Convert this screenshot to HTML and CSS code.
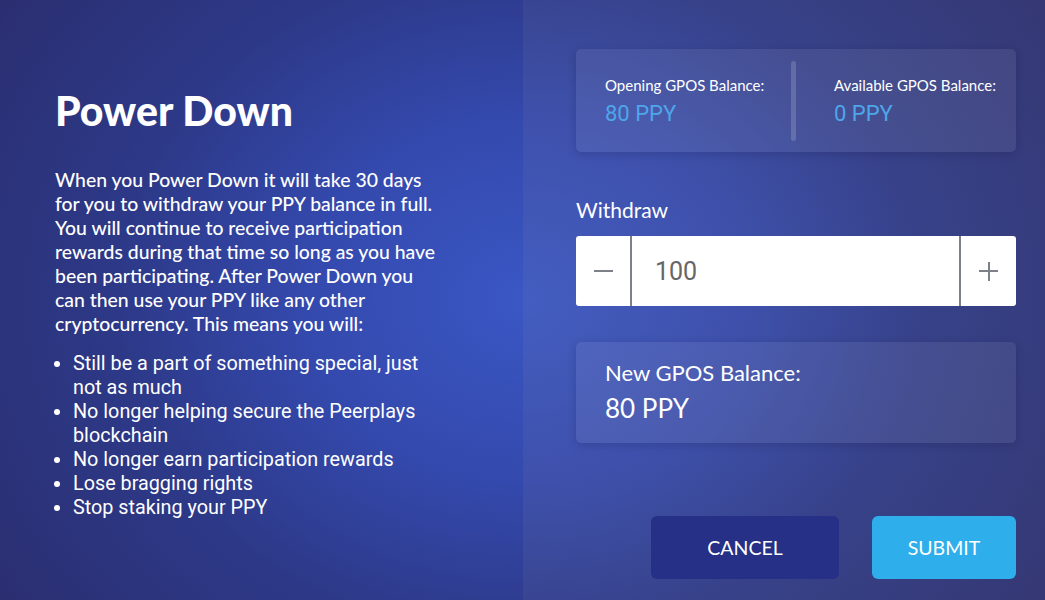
FILE: index.html
```html
<!DOCTYPE html>
<html lang="en">
<head>
<meta charset="utf-8">
<title>Power Down</title>
<link rel="stylesheet" href="styles.css">
</head>
<body>
<div class="page">
  <section class="info">
    <h1 class="title">Power Down</h1>
    <p class="desc">When you Power Down it will take 30 days for you to withdraw your PPY balance in full. You will continue to receive participation rewards during that time so long as you have been participating. After Power Down you can then use your PPY like any other cryptocurrency. This means you will:</p>
    <ul class="list">
      <li>Still be a part of something special, just not as much</li>
      <li>No longer helping secure the Peerplays blockchain</li>
      <li>No longer earn participation rewards</li>
      <li>Lose bragging rights</li>
      <li>Stop staking your PPY</li>
    </ul>
  </section>
  <section class="form">
    <div class="card balances">
      <div class="bal">
        <div class="bal-label">Opening GPOS Balance:</div>
        <div class="bal-value">80 PPY</div>
      </div>
      <div class="divider"></div>
      <div class="bal bal-right">
        <div class="bal-label">Available GPOS Balance:</div>
        <div class="bal-value">0 PPY</div>
      </div>
    </div>
    <div class="field-label">Withdraw</div>
    <div class="stepper">
      <div class="step step-minus"><span class="minus"></span></div>
      <div class="amount">100</div>
      <div class="step step-plus"><span class="plus"></span></div>
    </div>
    <div class="card newbal">
      <div class="new-label">New GPOS Balance:</div>
      <div class="new-value">80 PPY</div>
    </div>
    <div class="actions">
      <button class="btn btn-cancel">CANCEL</button>
      <button class="btn btn-submit">SUBMIT</button>
    </div>
  </section>
</div>
</body>
</html>
```
FILE: styles.css
```css
* { box-sizing: border-box; }
html, body { margin: 0; padding: 0; }
body {
  width: 1045px;
  height: 600px;
  overflow: hidden;
  color: #fff;
  font-family: "Lato", "Liberation Sans", sans-serif;
  background: radial-gradient(ellipse 620px 520px at 522px 300px, #3a57c4 0%, #3449ad 35%, #2d3988 65%, #2b2f72 100%);
}
.page {
  display: flex;
  height: 600px;
}
.info {
  width: 523px;
  padding: 87px 0 0 55px;
}
.title {
  margin: 0;
  font-size: 41px;
  line-height: 48px;
  font-weight: 900;
}
.desc {
  margin: 33px 0 0;
  width: 390px;
  font-size: 19.4px;
  line-height: 24px;
  font-weight: 500;
}
.list {
  margin: 16px 0 0;
  padding-left: 18px;
  width: 390px;
  font-family: "Roboto", "Liberation Sans", sans-serif;
  font-size: 19.8px;
  line-height: 24px;
}
.form {
  flex: 1;
  display: flex;
  flex-direction: column;
  padding: 49px 29px 21px 53px;
  background: rgba(200, 180, 160, 0.07);
}
.card {
  background: rgba(255, 255, 255, 0.07);
  border-radius: 5px;
  box-shadow: 0 2px 10px rgba(10, 10, 50, 0.18);
}
.balances {
  height: 103px;
  display: grid;
  grid-template-columns: 186px 5px 1fr;
  padding-left: 29px;
}
.bal { padding-top: 26px; }
.bal-right { padding-left: 38px; }
.bal-label {
  font-size: 15px;
  line-height: 20px;
}
.bal-value {
  margin-top: 6px;
  font-family: "Roboto", "Liberation Sans", sans-serif;
  font-size: 22px;
  line-height: 26px;
  color: #4ea6ea;
}
.divider {
  align-self: center;
  height: 80px;
  border-radius: 3px;
  background: rgba(255, 255, 255, 0.16);
}
.field-label {
  margin-top: 46px;
  font-size: 21px;
  line-height: 24px;
}
.stepper {
  margin-top: 14px;
  height: 70px;
  display: flex;
  background: #fff;
  border-radius: 3px;
}
.step {
  width: 55px;
  display: flex;
  align-items: center;
  justify-content: center;
}
.step-minus { border-right: 2px solid #7c8189; width: 56px; }
.step-plus { border-left: 2px solid #7c8189; width: 57px; }
.minus, .plus {
  position: relative;
  width: 19px;
  height: 19px;
}
.minus::before, .plus::before, .plus::after {
  content: "";
  position: absolute;
  background: #7c8189;
}
.minus::before, .plus::before {
  left: 0; right: 0; top: 8.5px; height: 2px;
}
.plus::after {
  top: 0; bottom: 0; left: 8.5px; width: 2px;
}
.amount {
  flex: 1;
  display: flex;
  align-items: center;
  padding-left: 23px;
  font-family: "Roboto", "Liberation Sans", sans-serif;
  font-size: 25px;
  color: #666;
}
.newbal {
  margin-top: 36px;
  height: 101px;
  padding: 17px 0 0 29px;
}
.new-label {
  font-size: 22px;
  line-height: 28px;
}
.new-value {
  margin-top: 5px;
  font-size: 26px;
  line-height: 32px;
}
.actions {
  margin-top: auto;
  display: flex;
  justify-content: flex-end;
  gap: 33px;
}
.btn {
  height: 63px;
  border: 0;
  border-radius: 6px;
  color: #fff;
  font-family: "Lato", "Liberation Sans", sans-serif;
  font-size: 19.5px;
  cursor: pointer;
}
.btn-cancel { width: 188px; background: #253086; }
.btn-submit { width: 144px; background: #2eaeeb; }
```
